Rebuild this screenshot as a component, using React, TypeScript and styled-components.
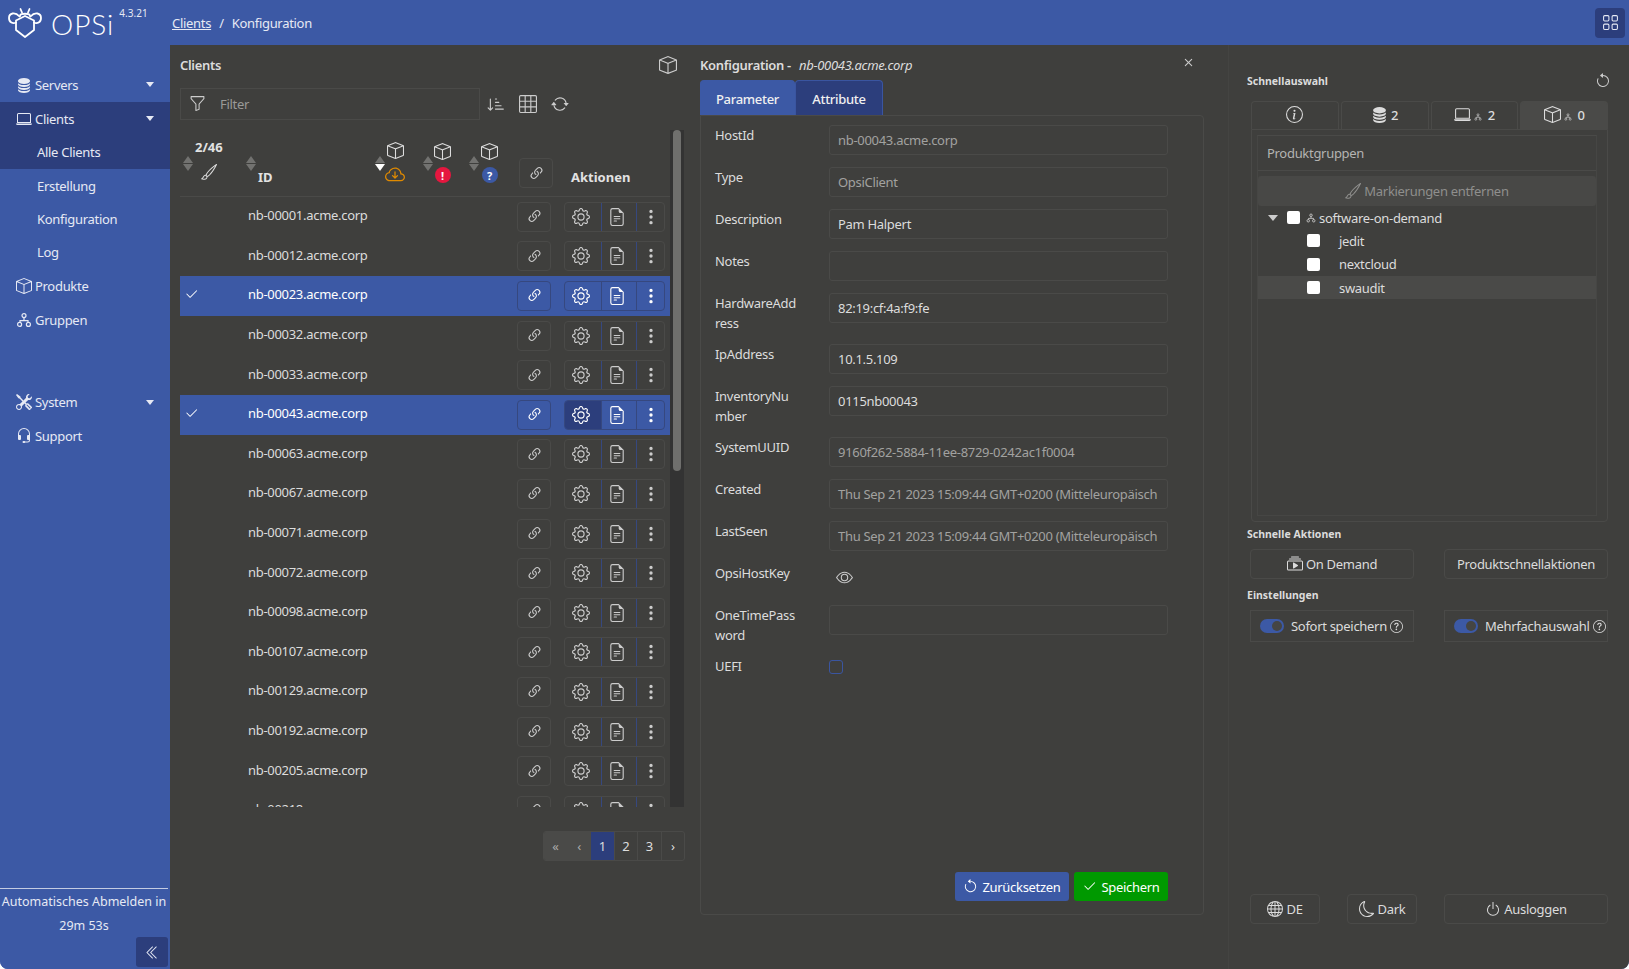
import React from "react";
import styled, { createGlobalStyle } from "styled-components";
import {
  BsDatabaseFill, BsLaptop, BsBox, BsTools, BsHeadset, BsCollectionPlay, BsGlobe, BsMoon, BsPower,
  BsQuestionCircle, BsInfoCircle, BsCheck2, BsLink45Deg, BsGear, BsFileEarmarkText, BsThreeDotsVertical, BsEye,
  BsFunnel, BsSortDownAlt, BsGrid3X3, BsArrowRepeat, BsArrowCounterclockwise, BsBrush, BsChevronDoubleLeft,
  BsCloudArrowDown, BsGrid, BsX,
} from "react-icons/bs";

const BLUE = "#3c59a5";
const DARK = "#2c3e7c";
const EDGE = "#36487f";
const BG = "#3f3f3d";
const LINE = "#4a4a48";
const TEXT = "#dcdcdc";

const Global = createGlobalStyle`
  html, body { margin: 0; padding: 0; background: #fff; }
  body { font-family: "Noto Sans", "Open Sans", sans-serif; font-size: 13px; letter-spacing: -0.3px; color: ${TEXT}; }
  * { box-sizing: border-box; }
`;

const Shell = styled.div`
  width: 1629px; height: 969px; display: grid; overflow: hidden;
  grid-template-columns: 170px 1fr; grid-template-rows: 45px 1fr;
  background: ${BLUE}; border-radius: 0 0 8px 8px;
`;
const Top = styled.header`
  grid-column: 1 / 3; display: flex; align-items: center; background: ${BLUE}; padding-right: 4px; position: relative;
`;
const Logo = styled.div`
  width: 172px; display: flex; align-items: center; padding-left: 8px; height: 45px; color: #fff;
`;
const LogoWord = styled.span`
  font-family: "Lato", sans-serif; font-weight: 300; font-size: 28px; letter-spacing: 1px; margin-left: 9px; line-height: 1; margin-top: 2px;
`;
const Version = styled.sup`
  font-size: 10px; letter-spacing: 0; font-family: "Noto Sans", sans-serif; color: #e6e9f4; margin-left: 5px; align-self: flex-start; margin-top: 6px; line-height: 14px;
`;
const Crumbs = styled.nav`
  display: flex; gap: 8px; color: #e6e9f4;
`;
const CrumbLink = styled.a`
  text-decoration: underline; color: #e6e9f4;
`;
const Apps = styled.button`
  margin-left: auto; width: 30px; height: 30px; border: 0; border-radius: 4px; background: ${DARK}; color: #e6e9f4;
  display: flex; align-items: center; justify-content: center; padding: 0; font-size: 17px;
`;

const Side = styled.aside`
  background: ${BLUE}; display: flex; flex-direction: column; padding-top: 22.5px; position: relative;
`;
const NavGroup = styled.div<{ $active?: boolean }>`
  background: ${p => (p.$active ? DARK : "transparent")};
`;
const NavItem = styled.div<{ $gap?: number }>`
  height: 34.2px; display: flex; align-items: center; padding-left: 16px; padding-right: 16px; gap: 3px; color: #e6e9f4;
  margin-top: ${p => p.$gap ?? 0}px;
  svg { font-size: 16px; flex: none; }
`;
const Caret = styled.span`
  margin-left: auto; width: 0; height: 0; border-left: 4px solid transparent; border-right: 4px solid transparent; border-top: 5px solid #e6e9f4;
`;
const SubItem = styled.div`
  height: 33.2px; display: flex; align-items: center; padding-left: 37px; color: #e6e9f4;
`;
const SideFoot = styled.div`
  margin-top: auto; display: flex; flex-direction: column; align-items: flex-end;
`;
const Logout = styled.div`
  width: 168px; align-self: flex-start; border-top: 1px solid #c4cce2; text-align: center; line-height: 24px; padding-top: 1px; height: 49px; color: #e6e9f4; font-size: 12.5px; white-space: nowrap; letter-spacing: 0;
`;
const Collapse = styled.button`
  width: 32px; height: 30px; margin: 0 2px 2px 0; border: 0; border-radius: 3px; background: ${DARK}; color: #e6e9f4;
  display: flex; align-items: center; justify-content: center; padding: 0; font-size: 15px;
`;

const Main = styled.main`
  background: ${BG}; display: flex; min-width: 0; min-height: 0;
`;
const ClientsPanel = styled.section`
  width: 530px; padding: 0 16px 0 10px; display: flex; flex-direction: column; flex: none;
`;
const TitleRow = styled.div`
  height: 43px; display: flex; align-items: center; justify-content: space-between; font-weight: 600; color: ${TEXT}; padding-bottom: 3px;
  svg { font-size: 18px; margin-right: 7px; color: #ccc; }
`;
const FilterRow = styled.div`
  display: flex; align-items: center; height: 31px; color: #ccc;
`;
const FilterBox = styled.div`
  width: 300px; height: 32px; border: 1px solid ${LINE}; display: flex; align-items: center; padding-left: 8px; gap: 14px; color: #9a9a98;
  svg { font-size: 17px; color: #ccc; }
`;
const ToolIcon = styled.span<{ $first?: boolean }>`
  display: flex; font-size: 18px; margin-left: ${p => (p.$first ? 7 : 14)}px;
`;
const TableWrap = styled.div`
  margin-top: 11px; height: 677px; overflow: hidden; display: flex; position: relative;
`;
const TableBody = styled.div`
  width: 490px; flex: none;
`;
const HeadRow = styled.div`
  height: 67px; display: flex; border-bottom: 1px solid ${LINE}; position: relative;
`;
const HeadCell = styled.div<{ $w: number; $pad?: number }>`
  width: ${p => p.$w}px; flex: none; display: flex; align-items: center; position: relative; padding-left: ${p => p.$pad ?? 0}px;
`;
const Stack = styled.div<{ $gap?: number; $left?: number; $up?: number }>`
  display: flex; flex-direction: column; align-items: center; gap: ${p => p.$gap ?? 7}px; color: #ddd;
  margin-left: ${p => p.$left ?? 0}px; margin-top: ${p => p.$up ?? 0}px;
`;
const Arrows = styled.span`
  display: flex; flex-direction: column; gap: 1px; flex: none;
`;
const Tri = styled.i<{ $down?: boolean; $on?: boolean }>`
  width: 0; height: 0; border-left: 5px solid transparent; border-right: 5px solid transparent;
  ${p => (p.$down ? "border-top" : "border-bottom")}: 7px solid ${p => (p.$on ? "#fff" : "#727270")};
`;
const HeadText = styled.span<{ $drop?: number; $left?: number }>`
  font-weight: 700; color: #e2e2e2; margin-top: ${p => p.$drop ?? 0}px; margin-left: ${p => p.$left ?? 0}px; letter-spacing: 0;
`;
const CloudIcon = styled(BsCloudArrowDown)`
  color: #e08a00; width: 20px; height: 20px; margin-top: -1px;
`;
const Badge = styled.span<{ $c: string }>`
  width: 16px; height: 16px; border-radius: 50%; background: ${p => p.$c}; color: #fff; font-size: 11px; font-weight: 700;
  display: flex; align-items: center; justify-content: center; line-height: 1; letter-spacing: 0;
`;
const LinkHead = styled(HeadCell)`
  align-items: flex-start; padding-top: 28px;
`;
const Row = styled.div<{ $sel?: boolean }>`
  height: 39.6px; display: flex; align-items: center; background: ${p => (p.$sel ? BLUE : "transparent")}; color: ${p => (p.$sel ? "#fff" : TEXT)};
`;
const CheckCell = styled.div`
  width: 68px; flex: none; padding-left: 4px; display: flex; font-size: 15px; margin-top: -3px;
`;
const IdCell = styled.div`
  width: 269px; flex: none; margin-top: -3px;
`;
const IconBtn = styled.span<{ $sel?: boolean }>`
  width: 34px; height: 30px; display: flex; align-items: center; justify-content: center; color: ${p => (p.$sel ? "#fff" : "#ccc")};
  font-size: 17px; border: 1px solid ${p => (p.$sel ? EDGE : LINE)}; border-radius: 4px; flex: none;
`;
const BtnGroup = styled.div<{ $sel?: boolean }>`
  display: flex; margin-left: 13px; height: 30px; width: 101px; border: 1px solid ${p => (p.$sel ? EDGE : LINE)}; border-radius: 4px; flex: none; overflow: hidden;
`;
const GroupCell = styled.span<{ $sel?: boolean; $w: number; $hot?: boolean; $shift?: number }>`
  width: ${p => p.$w}px; flex: none; display: flex; align-items: center; justify-content: center; font-size: 18px; color: ${p => (p.$sel ? "#fff" : "#ccc")};
  background: ${p => (p.$hot ? DARK : "transparent")}; padding-right: ${p => p.$shift ?? 0}px;
  & + & { border-left: 1px solid ${p => (p.$sel ? EDGE : LINE)}; }
`;
const Scroll = styled.div`
  width: 14px; background: #333; position: relative; flex: none; height: 100%;
`;
const Thumb = styled.div`
  position: absolute; left: 3px; top: 0; width: 8px; height: 341px; border-radius: 4px; background: #6f6f6d;
`;
const Pager = styled.div`
  margin-top: 24px; align-self: flex-end; display: flex; height: 30px; margin-right: -1px; border-radius: 3px; overflow: hidden; border: 1px solid ${LINE};
`;
const Page = styled.span<{ $on?: boolean; $off?: boolean }>`
  width: ${p => (p.$off ? 23 : 23.5)}px; display: flex; align-items: center; justify-content: center;
  background: ${p => (p.$on ? DARK : p.$off ? "#4a4a48" : "transparent")}; color: ${p => (p.$off ? "#aaa" : "#ddd")};
  & + & { border-left: 1px solid ${p => (p.$off ? "#4a4a48" : LINE)}; }
`;

const ConfigPanel = styled.section`
  width: 504px; flex: none; display: flex; flex-direction: column; position: relative;
`;
const ConfigTitle = styled.div`
  height: 35px; display: flex; align-items: center; gap: 8px; font-weight: 600; padding-top: 5px;
  em { font-weight: 400; }
`;
const Close = styled.span`
  position: absolute; right: 7px; top: 9px; font-size: 17px; display: flex; color: #ccc;
`;
const Tabs = styled.div`
  display: flex; height: 35px;
`;
const Tab = styled.div<{ $on?: boolean }>`
  display: flex; align-items: center; border-radius: 4px 4px 0 0; padding-top: 1px;
  background: ${p => (p.$on ? BLUE : DARK)}; border: 1px solid ${p => (p.$on ? BLUE : "#3a55a0")}; border-bottom: 0; color: #f0f0f0; font-weight: 500;
  width: ${p => (p.$on ? 95 : 88)}px; justify-content: center;
`;
const Form = styled.div`
  height: 800px; border: 1px solid ${LINE}; border-radius: 0 4px 4px 4px; padding: 9px 35px 13px 14px; display: flex; flex-direction: column;
`;
const Field = styled.div`
  display: flex; margin-bottom: 12px; min-height: 30px;
`;
const Label = styled.label`
  width: 114px; flex: none; line-height: 19.5px; padding-right: 14px; color: ${TEXT}; padding-top: 1px; margin-bottom: -1px;
`;
const Input = styled.div<{ $off?: boolean }>`
  width: 339px; height: 30px; border: 1px solid ${LINE}; border-radius: 3px; display: flex; align-items: center; padding: 0 8px;
  color: ${p => (p.$off ? "#a2a2a0" : TEXT)}; white-space: nowrap; overflow: hidden;
`;
const EyeIcon = styled.span`
  display: flex; font-size: 17px; margin: 6px 0 0 7px; color: #ccc;
`;
const Check = styled.span`
  width: 14px; height: 14px; border: 1.5px solid #3a55a0; border-radius: 3px; margin-top: 4px;
`;
const FormFoot = styled.div`
  margin-top: auto; display: flex; justify-content: flex-end; gap: 5px;
`;
const Solid = styled.button<{ $c: string; $w: number }>`
  background: ${p => p.$c}; width: ${p => p.$w}px; height: 29px; border: 0; border-radius: 3px; color: #fff; font: inherit; letter-spacing: inherit;
  display: flex; align-items: center; justify-content: center; gap: 4px; padding: 0;
  svg { font-size: 15px; }
`;

const QuickPanel = styled.section`
  flex: 1; margin-left: 24px; border-left: 1px solid #444442; padding: 0 21px 45px 18px; display: flex; flex-direction: column; min-width: 0;
`;
const SmallHead = styled.div`
  font-size: 10.5px; font-weight: 700; color: #dcdcdc; line-height: 14px; letter-spacing: 0;
`;
const QuickHead = styled.div`
  height: 56px; display: flex; align-items: center; justify-content: space-between; padding-top: 15px;
  svg { font-size: 16px; color: #ccc; margin-right: -3px; }
`;
const QuickTabs = styled.div`
  display: flex; height: 28px; margin-left: 4px; gap: 2px;
`;
const QuickTab = styled.div<{ $on?: boolean }>`
  flex: 1; display: flex; align-items: center; justify-content: center; gap: 3px; border: 1px solid ${LINE}; border-bottom: 0; border-radius: 4px 4px 0 0; padding-bottom: 2px;
  background: ${p => (p.$on ? "#4a4a48" : "transparent")}; font-weight: 500;
  > svg { font-size: 17px; }
`;
const TabGroupIcon = styled.span`
  display: flex; margin-right: 3px; margin-top: 5px;
`;
const QuickBox = styled.div`
  margin-left: 4px; height: 393px; border: 1px solid ${LINE}; border-radius: 0 0 4px 4px; padding: 5px 10px 5px 5px;
`;
const Inner = styled.div`
  height: 100%; border: 1px solid #464644; border-top: 1px solid ${LINE};
`;
const BoxHead = styled.div`
  height: 35px; display: flex; align-items: center; padding-left: 9px; border-bottom: 1px solid ${LINE}; color: #b4b4b2;
`;
const ClearBtn = styled.div`
  margin-top: 5px; height: 30px; background: #484846; border-radius: 3px; display: flex; align-items: center; justify-content: center; gap: 3px; color: #8f8f8d;
  svg { font-size: 16px; }
`;
const TreeRow = styled.div<{ $hl?: boolean; $child?: boolean }>`
  height: 23.3px; display: flex; align-items: center; background: ${p => (p.$hl ? "#4a4a48" : "transparent")};
  padding-left: ${p => (p.$child ? 49 : 10)}px;
`;
const TreeCaret = styled.span`
  width: 0; height: 0; border-left: 5px solid transparent; border-right: 5px solid transparent; border-top: 6px solid #ccc; margin-right: 9px;
`;
const WhiteBox = styled.span`
  width: 13px; height: 13px; border-radius: 2px; background: #fff; flex: none;
`;
const TreeIcon = styled.span`
  display: flex; margin: 0 3px 0 6px;
`;
const TreeText = styled.span<{ $child?: boolean }>`
  margin-left: ${p => (p.$child ? 19 : 0)}px;
`;
const SectionHead = styled(SmallHead)<{ $top: number }>`
  margin-top: ${p => p.$top}px;
`;
const TwoCol = styled.div`
  display: flex; margin-left: 3px; justify-content: space-between; margin-top: 8px;
`;
const Outline = styled.div<{ $w?: number }>`
  width: ${p => p.$w ?? 164}px; height: 30px; border: 1px solid ${LINE}; border-radius: 4px;
  display: flex; align-items: center; justify-content: center; gap: 3px; white-space: nowrap;
  svg { font-size: 16px; }
`;
const SettingBox = styled.div`
  width: 164px; height: 32px; border: 1px solid ${LINE}; display: flex; align-items: center; padding-left: 9px; white-space: nowrap;
`;
const Switch = styled.span`
  width: 24px; height: 14px; border-radius: 7px; background: ${BLUE}; position: relative; margin-right: 7px; flex: none;
  &::after { content: ""; position: absolute; right: 2px; top: 2px; width: 10px; height: 10px; border-radius: 50%; background: #454543; }
`;
const Help = styled.span`
  display: flex; margin-left: 3px; svg { font-size: 13px; }
`;
const BottomRow = styled.div`
  margin-top: auto; margin-left: 3px; display: flex; justify-content: space-between; height: 30px;
`;
const BottomLeft = styled.div`
  display: flex; gap: 27px;
`;

const LogoMark = () => (
  <svg width="34" height="32" viewBox="0 0 34 32" fill="none" stroke="#fff" strokeWidth="1.8" strokeLinejoin="round" strokeLinecap="round">
    <path d="M17 9 L26 13.5 V23 L17 30 L8 23 V13.5 Z" />
    <path d="M11.5 9.5 C7 4.5 1 6 1 11 C1 15.5 5 17 8 15.5" />
    <path d="M22.5 9.5 C27 4.5 33 6 33 11 C33 15.5 29 17 26 15.5" />
    <path d="M12 9 C12 6 22 6 22 9" />
    <path d="M14 5.5 L12.5 2 M20 5.5 L21.5 2" />
  </svg>
);

const GroupIcon = ({ size = 14 }: { size?: number }) => (
  <svg width={size} height={size} viewBox="0 0 16 16" fill="none" stroke="currentColor" strokeWidth="1.2">
    <circle cx="8" cy="3.6" r="2" />
    <circle cx="3.6" cy="12.4" r="2" />
    <circle cx="12.4" cy="12.4" r="2" />
    <path d="M8 5.6 V8 M4 10.4 V8.6 H12 V10.4" />
  </svg>
);

const SortArrows = ({ on }: { on?: boolean }) => (
  <Arrows><Tri /><Tri $down $on={on} /></Arrows>
);

const hosts = ["00001", "00012", "00023", "00032", "00033", "00043", "00063", "00067", "00071", "00072", "00098", "00107", "00129", "00192", "00205", "00218"];
const selected = new Set(["00023", "00043"]);

const fields: { l: React.ReactNode; k: string; v?: string; off?: boolean }[] = [
  { k: "h", l: "HostId", v: "nb-00043.acme.corp", off: true },
  { k: "t", l: "Type", v: "OpsiClient", off: true },
  { k: "d", l: "Description", v: "Pam Halpert" },
  { k: "n", l: "Notes", v: "" },
  { k: "w", l: <>HardwareAdd<wbr />ress</>, v: "82:19:cf:4a:f9:fe" },
  { k: "i", l: "IpAddress", v: "10.1.5.109" },
  { k: "v", l: <>InventoryNu<wbr />mber</>, v: "0115nb00043" },
  { k: "s", l: "SystemUUID", v: "9160f262-5884-11ee-8729-0242ac1f0004", off: true },
  { k: "c", l: "Created", v: "Thu Sep 21 2023 15:09:44 GMT+0200 (Mitteleuropäisch", off: true },
  { k: "e", l: "LastSeen", v: "Thu Sep 21 2023 15:09:44 GMT+0200 (Mitteleuropäisch", off: true },
];

export default function App() {
  return (
    <Shell>
      <Global />
      <Top>
        <Logo>
          <LogoMark />
          <LogoWord>OPSi</LogoWord>
          <Version>4.3.21</Version>
        </Logo>
        <Crumbs>
          <CrumbLink>Clients</CrumbLink>
          <span>/</span>
          <span>Konfiguration</span>
        </Crumbs>
        <Apps><BsGrid /></Apps>
      </Top>
      <Side>
        <NavItem><BsDatabaseFill />Servers<Caret /></NavItem>
        <NavGroup $active>
          <NavItem><BsLaptop />Clients<Caret /></NavItem>
          <SubItem>Alle Clients</SubItem>
        </NavGroup>
        <SubItem>Erstellung</SubItem>
        <SubItem>Konfiguration</SubItem>
        <SubItem>Log</SubItem>
        <NavItem><BsBox />Produkte</NavItem>
        <NavItem><GroupIcon size={16} />Gruppen</NavItem>
        <NavItem $gap={48}><BsTools />System<Caret /></NavItem>
        <NavItem><BsHeadset />Support</NavItem>
        <SideFoot>
          <Logout>Automatisches Abmelden in<br />29m 53s</Logout>
          <Collapse><BsChevronDoubleLeft /></Collapse>
        </SideFoot>
      </Side>
      <Main>
        <ClientsPanel>
          <TitleRow>Clients<BsBox /></TitleRow>
          <FilterRow>
            <FilterBox><BsFunnel />Filter</FilterBox>
            <ToolIcon $first><BsSortDownAlt /></ToolIcon>
            <ToolIcon><BsGrid3X3 /></ToolIcon>
            <ToolIcon><BsArrowRepeat /></ToolIcon>
          </FilterRow>
          <TableWrap>
            <TableBody>
              <HeadRow>
                <HeadCell $w={66} $pad={3}>
                  <SortArrows />
                  <Stack $left={2} $up={-8} $gap={8}><HeadText>2/46</HeadText><BsBrush size={16} /></Stack>
                </HeadCell>
                <HeadCell $w={129}>
                  <SortArrows />
                  <HeadText $left={2} $drop={28}>ID</HeadText>
                </HeadCell>
                <HeadCell $w={48}>
                  <SortArrows on />
                  <Stack><BsBox size={17} /><CloudIcon /></Stack>
                </HeadCell>
                <HeadCell $w={46}>
                  <SortArrows />
                  <Stack $left={1}><BsBox size={17} /><Badge $c="#e5173f">!</Badge></Stack>
                </HeadCell>
                <HeadCell $w={50}>
                  <SortArrows />
                  <Stack $left={2}><BsBox size={17} /><Badge $c={BLUE}>?</Badge></Stack>
                </HeadCell>
                <LinkHead $w={52}>
                  <IconBtn><BsLink45Deg /></IconBtn>
                </LinkHead>
                <HeadCell $w={59}>
                  <HeadText $drop={28}>Aktionen</HeadText>
                </HeadCell>
              </HeadRow>
              {hosts.map(h => {
                const s = selected.has(h);
                return (
                  <Row key={h} $sel={s}>
                    <CheckCell>{s && <BsCheck2 />}</CheckCell>
                    <IdCell>nb-{h}.acme.corp</IdCell>
                    <IconBtn $sel={s}><BsLink45Deg /></IconBtn>
                    <BtnGroup $sel={s}>
                      <GroupCell $sel={s} $w={36} $shift={4} $hot={h === "00043"}><BsGear /></GroupCell>
                      <GroupCell $sel={s} $w={35} $shift={4}><BsFileEarmarkText /></GroupCell>
                      <GroupCell $sel={s} $w={28}><BsThreeDotsVertical /></GroupCell>
                    </BtnGroup>
                  </Row>
                );
              })}
            </TableBody>
            <Scroll><Thumb /></Scroll>
          </TableWrap>
          <Pager>
            <Page $off>«</Page>
            <Page $off>‹</Page>
            <Page $on>1</Page>
            <Page>2</Page>
            <Page>3</Page>
            <Page>›</Page>
          </Pager>
        </ClientsPanel>
        <ConfigPanel>
          <ConfigTitle>Konfiguration - <em>nb-00043.acme.corp</em></ConfigTitle>
          <Close><BsX /></Close>
          <Tabs>
            <Tab $on>Parameter</Tab>
            <Tab>Attribute</Tab>
          </Tabs>
          <Form>
            {fields.map(f => (
              <Field key={f.k}>
                <Label>{f.l}</Label>
                <Input $off={f.off}>{f.v}</Input>
              </Field>
            ))}
            <Field>
              <Label>OpsiHostKey</Label>
              <EyeIcon><BsEye /></EyeIcon>
            </Field>
            <Field>
              <Label>OneTimePass<wbr />word</Label>
              <Input />
            </Field>
            <Field>
              <Label>UEFI</Label>
              <Check />
            </Field>
            <FormFoot>
              <Solid $c={BLUE} $w={114}><BsArrowCounterclockwise />Zurücksetzen</Solid>
              <Solid $c="#009900" $w={94}><BsCheck2 />Speichern</Solid>
            </FormFoot>
          </Form>
        </ConfigPanel>
        <QuickPanel>
          <QuickHead>
            <SmallHead>Schnellauswahl</SmallHead>
            <BsArrowCounterclockwise />
          </QuickHead>
          <QuickTabs>
            <QuickTab><BsInfoCircle /></QuickTab>
            <QuickTab><BsDatabaseFill /> 2</QuickTab>
            <QuickTab><BsLaptop /><TabGroupIcon><GroupIcon size={8} /></TabGroupIcon> 2</QuickTab>
            <QuickTab $on><BsBox /><TabGroupIcon><GroupIcon size={8} /></TabGroupIcon> 0</QuickTab>
          </QuickTabs>
          <QuickBox>
            <Inner>
              <BoxHead>Produktgruppen</BoxHead>
              <ClearBtn><BsBrush />Markierungen entfernen</ClearBtn>
              <TreeRow>
                <TreeCaret /><WhiteBox /><TreeIcon><GroupIcon size={10} /></TreeIcon><TreeText>software-on-demand</TreeText>
              </TreeRow>
              <TreeRow $child><WhiteBox /><TreeText $child>jedit</TreeText></TreeRow>
              <TreeRow $child><WhiteBox /><TreeText $child>nextcloud</TreeText></TreeRow>
              <TreeRow $child $hl><WhiteBox /><TreeText $child>swaudit</TreeText></TreeRow>
            </Inner>
          </QuickBox>
          <SectionHead $top={5}>Schnelle Aktionen</SectionHead>
          <TwoCol>
            <Outline><BsCollectionPlay />On Demand</Outline>
            <Outline>Produktschnellaktionen</Outline>
          </TwoCol>
          <SectionHead $top={9}>Einstellungen</SectionHead>
          <TwoCol>
            <SettingBox><Switch />Sofort speichern<Help><BsQuestionCircle /></Help></SettingBox>
            <SettingBox><Switch />Mehrfachauswahl<Help><BsQuestionCircle /></Help></SettingBox>
          </TwoCol>
          <BottomRow>
            <BottomLeft>
              <Outline $w={70}><BsGlobe />DE</Outline>
              <Outline $w={70}><BsMoon />Dark</Outline>
            </BottomLeft>
            <Outline $w={164}><BsPower />Ausloggen</Outline>
          </BottomRow>
        </QuickPanel>
      </Main>
    </Shell>
  );
}
